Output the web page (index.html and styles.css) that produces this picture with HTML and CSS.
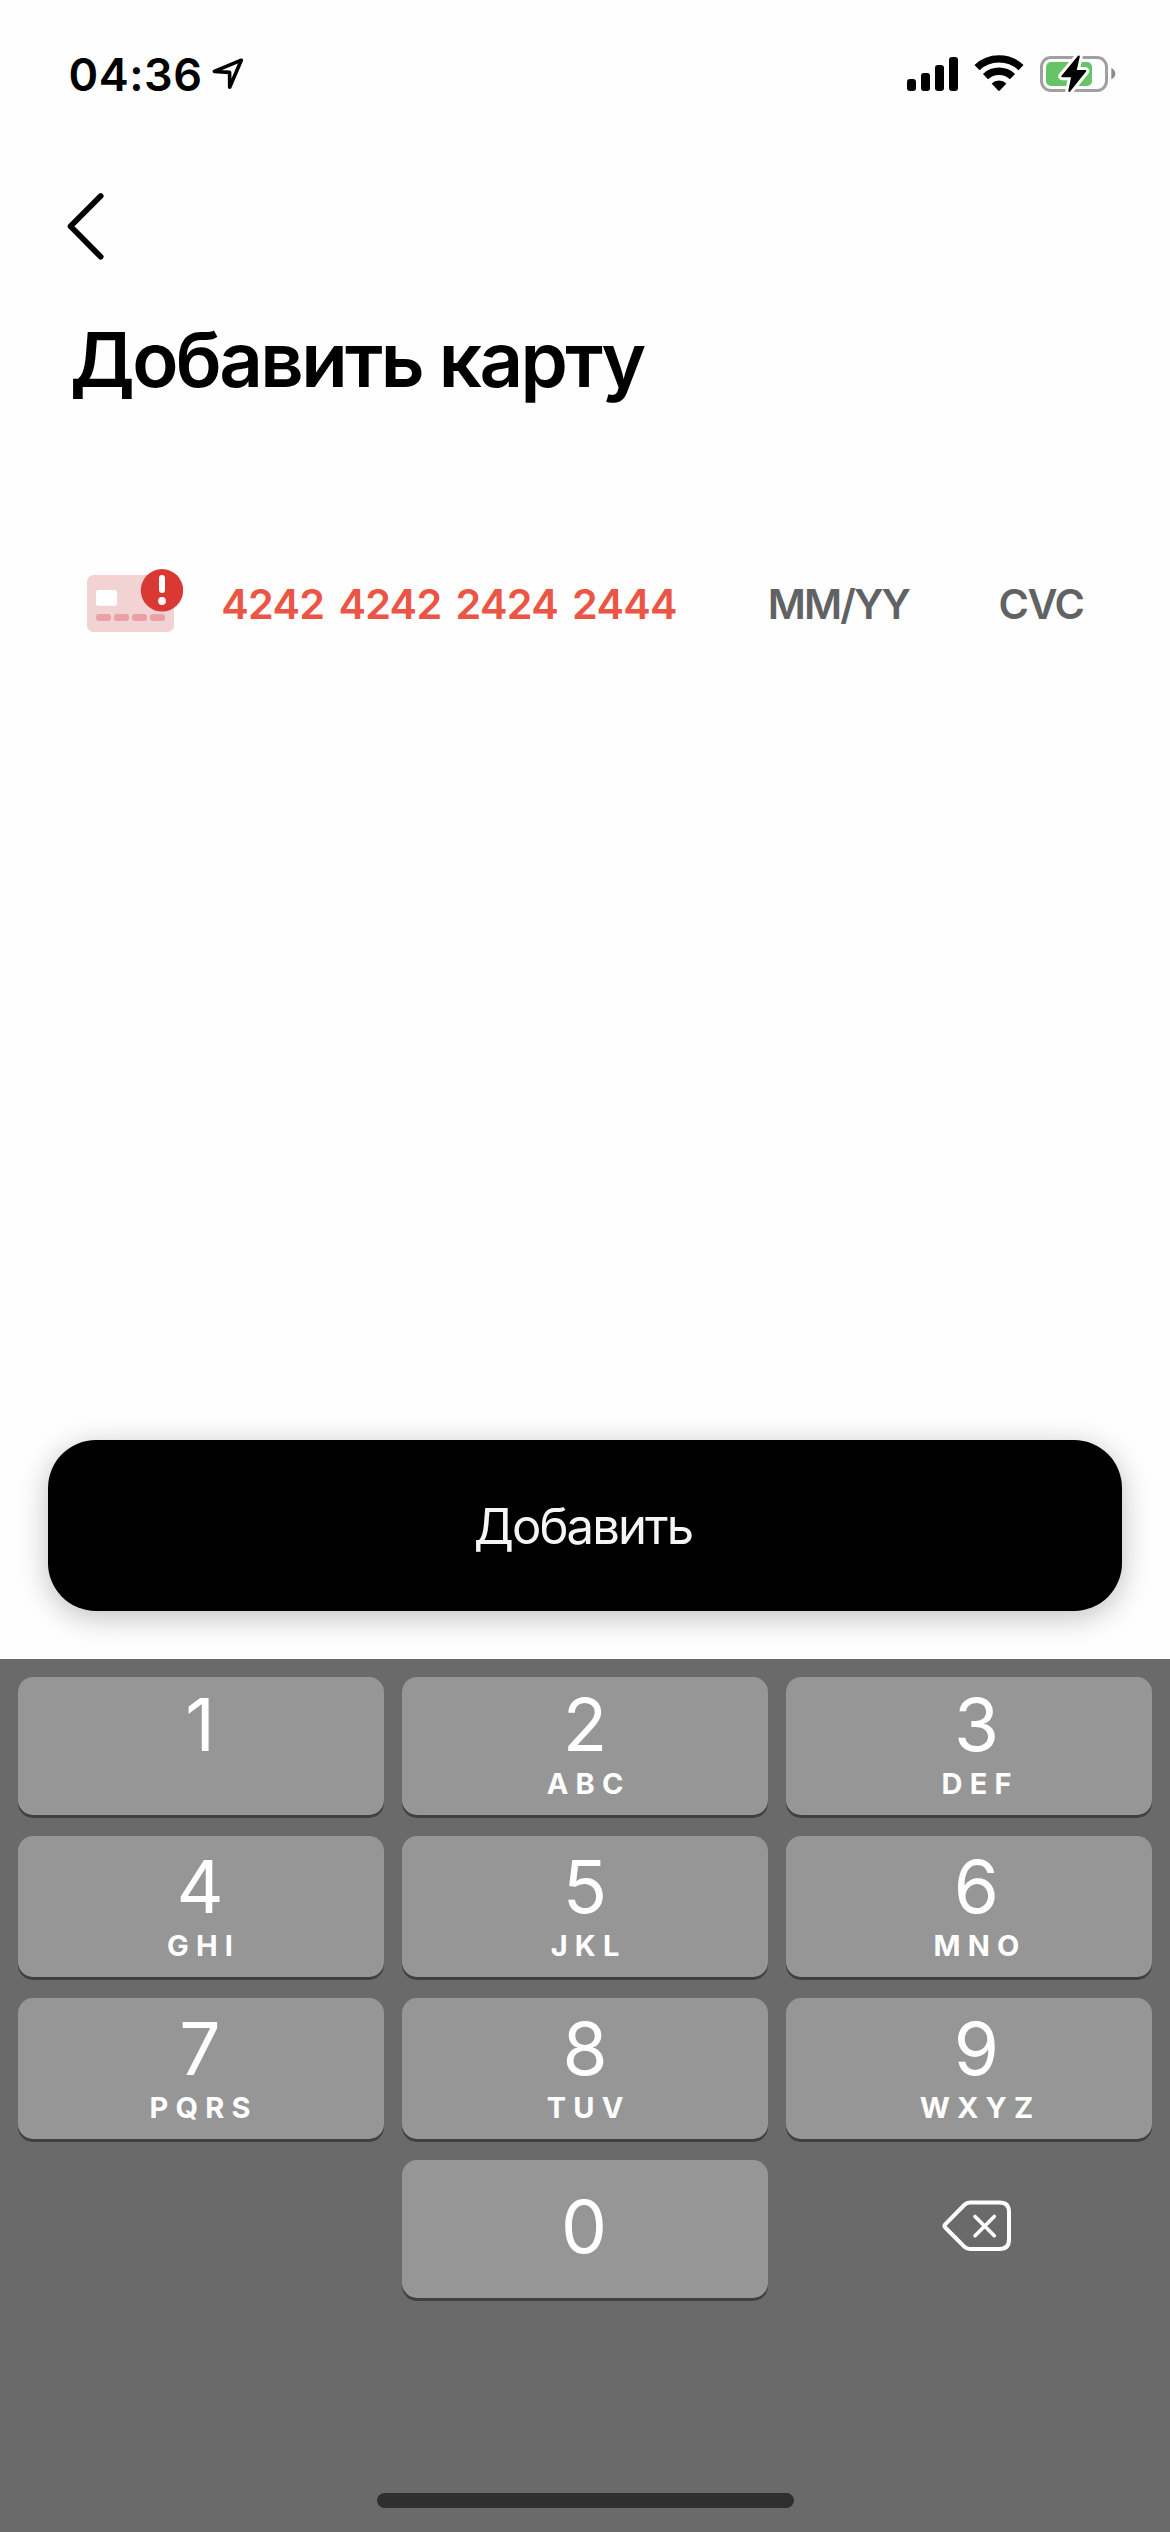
FILE: index.html
```html
<!DOCTYPE html>
<html lang="ru">
<head>
<meta charset="utf-8">
<title>Добавить карту</title>
<link rel="stylesheet" href="styles.css">
</head>
<body>
<div class="screen">
  <header class="status">
    <div class="status-left">
      <span class="time">04:36</span>
      <svg class="location" viewBox="210 55 36 38"><path d="M241.3 60.2 214.3 71.4 229.6 72.4 229.7 87.3Z"/></svg>
    </div>
    <div class="status-right">
      <svg class="signal" viewBox="907 54 51 38">
        <rect x="907" y="79" width="9" height="12" rx="3"/>
        <rect x="921" y="73" width="9" height="18" rx="3"/>
        <rect x="935" y="65" width="9" height="26" rx="3"/>
        <rect x="949" y="57" width="9" height="34" rx="3"/>
      </svg>
      <svg class="wifi" viewBox="974 54 50 38">
        <path class="wifi-arc" d="M977 67.6A32.2 32.2 0 0 1 1021 67.6"/>
        <path class="wifi-arc" d="M985.5 76.6A19.8 19.8 0 0 1 1012.5 76.6"/>
        <path d="M991.6 83.4A11 11 0 0 1 1006.4 83.4L999.8 90.6Q999 91.4 998.2 90.6Z"/>
      </svg>
      <svg class="battery" viewBox="1040 54 76 40">
        <rect class="battery-case" x="1041.5" y="57.5" width="65" height="33" rx="9.5"/>
        <path class="battery-cap" d="M1111.300 68Q1115.300 70 1115.300 73.700T1111.300 79.300Z"/>
        <rect class="battery-level" x="1046" y="62" width="46" height="24" rx="5"/>
        <path class="bolt-halo" d="M1078.800 56.500 1062.300 76.300H1072.300L1069.300 91 1085.300 71H1075.500Z"/>
        <path class="bolt" d="M1078.800 56.500 1062.300 76.300H1072.300L1069.300 91 1085.300 71H1075.500Z"/>
      </svg>
    </div>
  </header>

  <button class="back" aria-label="Назад">
    <svg viewBox="64 190 42 74"><path d="M100.700 196 70.500 226.300 100.700 256.800"/></svg>
  </button>
  <h1 class="title">Добавить карту</h1>

  <div class="card-row">
    <svg class="card-icon" viewBox="87 569 96 63">
      <rect class="card-body" x="87" y="575" width="87" height="57" rx="6.500"/>
      <rect class="white" x="96" y="590" width="21" height="15.700" rx="2"/>
      <g class="card-dash">
        <rect x="96" y="614" width="15" height="7" rx="3"/>
        <rect x="114" y="614" width="15" height="7" rx="3"/>
        <rect x="132" y="614" width="15" height="7" rx="3"/>
        <rect x="150" y="614" width="15" height="7" rx="3"/>
      </g>
      <circle class="alert" cx="162" cy="590.300" r="21.200"/>
      <rect class="white" x="159" y="575" width="6" height="18" rx="3"/>
      <circle class="white" cx="162" cy="601" r="3.900"/>
    </svg>
    <span class="number">4242 4242 2424 2444</span>
    <span class="expiry">MM/YY</span>
    <span class="cvc">CVC</span>
  </div>

  <button class="submit">Добавить</button>

  <div class="keyboard">
    <div class="keys">
      <div class="key first"><span class="digit">1</span></div>
      <div class="key"><span class="digit">2</span><span class="letters">ABC</span></div>
      <div class="key last"><span class="digit">3</span><span class="letters">DEF</span></div>
      <div class="key first"><span class="digit">4</span><span class="letters">GHI</span></div>
      <div class="key"><span class="digit">5</span><span class="letters">JKL</span></div>
      <div class="key last"><span class="digit">6</span><span class="letters">MNO</span></div>
      <div class="key first"><span class="digit">7</span><span class="letters">PQRS</span></div>
      <div class="key"><span class="digit">8</span><span class="letters">TUV</span></div>
      <div class="key last"><span class="digit">9</span><span class="letters">WXYZ</span></div>
      <div class="key zero"><span class="digit">0</span></div>
      <div class="delete">
        <svg viewBox="942 2200 70 52">
          <path class="delete-shape" d="M945.200 2224.300 964.300 2205Q966.600 2202.600 970 2202.600H999.500Q1009 2202.600 1009 2212V2239.500Q1009 2249 999.500 2249H970Q966.600 2249 964.300 2246.600L945.200 2227.500Q943.800 2225.900 945.200 2224.300Z"/>
          <path class="delete-cross" d="M975 2216.500 994.300 2235.700M994.300 2216.500 975 2235.700"/>
        </svg>
      </div>
    </div>
    <div class="home"></div>
  </div>
</div>
</body>
</html>
```
FILE: styles.css
```css
* { box-sizing: border-box; }

body {
  margin: 0;
  background: #fefefe;
  font-family: Inter, "Liberation Sans", sans-serif;
}

button {
  border: 0;
  background: none;
  padding: 0;
  font-family: inherit;
}

svg { display: block; flex: none; }

.screen {
  width: 1170px;
  height: 2532px;
  display: flex;
  flex-direction: column;
  overflow: hidden;
}

/* Status bar */
.status {
  height: 190px;
  padding: 45px 54px 0 68.5px;
  display: flex;
  justify-content: space-between;
  align-items: flex-start;
}

.status-left { display: flex; }

.time {
  width: 141.500px;
  font-size: 45px;
  font-weight: 600;
  line-height: 60px;
  letter-spacing: 0.5px;
  color: #000;
}

.location { width: 36px; height: 38px; margin-top: 10px; }
.location path {
  fill: none;
  stroke: #000;
  stroke-width: 3.6;
  stroke-linejoin: round;
}

.status-right { display: flex; gap: 16px; padding-top: 9px; }
.signal { width: 51px; height: 38px; }
.wifi { width: 50px; height: 38px; }
.wifi-arc { fill: none; stroke: #000; stroke-width: 7.4; }
.battery { width: 76px; height: 40px; }
.battery-case { fill: none; stroke: #a0a0a0; stroke-width: 3; }
.battery-cap { fill: #8c8c8c; }
.battery-level { fill: #65c466; }
.bolt-halo { fill: #fefefe; stroke: #fefefe; stroke-width: 8; stroke-linejoin: round; }
.bolt { fill: #000; stroke: #000; stroke-width: 2; stroke-linejoin: round; }

/* Heading */
.back { width: 42px; height: 74px; margin-left: 64px; }
.back svg { width: 42px; height: 74px; }
.back path {
  fill: none;
  stroke: #000;
  stroke-width: 5.7;
  stroke-linecap: round;
  stroke-linejoin: round;
}

.title {
  margin: 50px 0 0 70px;
  font-size: 76px;
  font-weight: 600;
  line-height: 90px;
  letter-spacing: -2.6px;
  color: #000;
}

/* Card entry */
.card-row {
  margin: 165px 0 0 87px;
  height: 63px;
  display: flex;
  font-size: 41.3px;
  font-weight: 560;
  line-height: 50px;
  color: #616264;
}

.card-row span { padding-top: 10px; white-space: nowrap; }
.card-icon { width: 96px; height: 63px; }
.card-body { fill: #f3d2d4; }
.card-dash { fill: #e8a2a6; }
.alert { fill: #da3832; }
.white { fill: #fff; }

.number {
  width: 546.500px;
  margin-left: 38.300px;
  letter-spacing: -0.7px;
  word-spacing: 4.4px;
  color: #eb5545;
}

.expiry { width: 230.600px; letter-spacing: -1.9px; }
.cvc { letter-spacing: -1.4px; }

.submit {
  width: 1074px;
  height: 171px;
  margin: 808px 48px 0;
  padding: 2px 4px 0 0;
  border-radius: 48px;
  background: #000;
  box-shadow: 0 6px 30px rgba(0, 0, 0, 0.25);
  font-size: 49px;
  font-weight: 400;
  letter-spacing: -1.9px;
  color: #f5f5f5;
}

/* Numeric keyboard */
.keyboard {
  height: 873px;
  margin-top: 48px;
  padding: 18px 18px 24px;
  background: #6a6a6a;
  display: flex;
  flex-direction: column;
  justify-content: space-between;
  align-items: center;
}

.keys {
  width: 1134px;
  display: grid;
  grid-template-columns: repeat(3, 366px);
  grid-template-rows: 138px 141px 141px 138px;
  gap: 21px 18px;
}

.key {
  padding-top: 14px;
  border-radius: 15px;
  background: #969696;
  box-shadow: 0 3px 0 #404040;
  display: flex;
  flex-direction: column;
  align-items: center;
  color: #fff;
}

.key:nth-child(-n+3) { padding-top: 11px; }
.key.first { padding-right: 2px; }
.key.last { padding-left: 15px; }
.key.zero { grid-column: 2; padding-top: 30px; padding-right: 2px; }

.digit { font-size: 73px; font-weight: 400; line-height: 73px; }

.letters {
  margin-top: 8px;
  padding-left: 7.2px;
  font-size: 29px;
  font-weight: 700;
  line-height: 29px;
  letter-spacing: 7.2px;
}

.delete { padding: 40px 0 0 156px; }
.delete svg { width: 70px; height: 52px; }
.delete path { fill: none; stroke: #fff; stroke-linecap: round; stroke-linejoin: round; }
.delete-shape { stroke-width: 4; }
.delete-cross { stroke-width: 3.6; }

.home {
  width: 417px;
  height: 15px;
  border-radius: 8px;
  background: #2f2f2f;
}
```
